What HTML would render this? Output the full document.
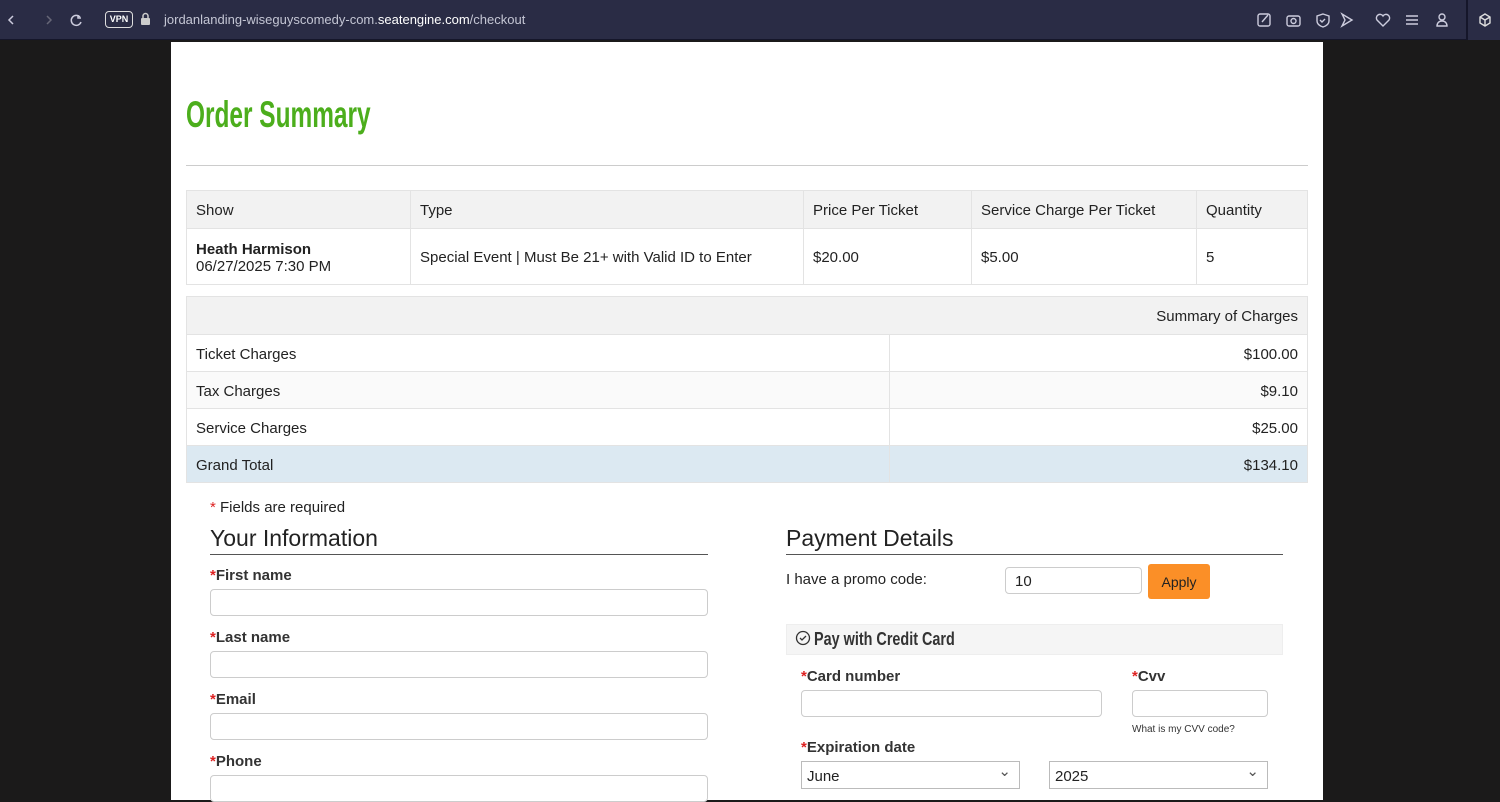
<!DOCTYPE html>
<html><head><meta charset="utf-8"><style>
*{box-sizing:border-box;margin:0;padding:0}
body{width:1500px;height:800px;overflow:hidden;background:#1b1a1a;font-family:"Liberation Sans",sans-serif;position:relative;color:#222}
.bar{position:absolute;left:0;top:0;width:1500px;height:40px;background:#2a2c45;border-bottom:1px solid #15162a}
.bar .url{position:absolute;left:164px;top:12px;font-size:13px;color:#c4c6d4}
.bar .url b{color:#fff;font-weight:normal}
.vpn{position:absolute;left:105px;top:11px;width:28px;height:17px;border:1.5px solid #ddd;border-radius:4px;color:#fff;font-size:9px;font-weight:bold;text-align:center;line-height:14px}
.ext{position:absolute;left:1466px;top:0;width:34px;height:40px;background:#2a2c45;border-left:2px solid #15162a}
.page{position:absolute;left:171px;top:42px;width:1152px;height:758px;background:#fff}
h1{position:absolute;left:15px;top:52px;font-family:"Liberation Sans Narrow","Liberation Sans",sans-serif;font-size:37px;color:#4cae1c;font-weight:bold;transform:scaleX(.66);transform-origin:left;white-space:nowrap}
.hr{position:absolute;left:15px;top:123px;width:1122px;border-top:1px solid #ccc}
table{position:absolute;left:15px;border-collapse:collapse;width:1122px;font-size:15px}
td{border:1px solid #e3e3e3;padding:2px 9px 0}
.t1{top:148px}
.t1 tr.h td{background:#f2f2f2;height:38px}
.t1 tr.d td{height:56px}
.t2{top:254px}
.t2 td{height:37px}
.t2 tr.h td{background:#f2f2f2;height:38px;text-align:right}
.t2 tr.g td{background:#dce9f2}
.t2 .r{text-align:right}
.t2 tr:nth-child(3) td{background:#fafafa}
.req{color:#d22;font-size:15px}
.lbl{position:absolute;font-size:15px;font-weight:bold;color:#333}
.inp{position:absolute;height:27px;border:1px solid #ccc;border-radius:4px;background:#fff}
.sec{position:absolute;font-size:23px;color:#222;border-bottom:1px solid #555;width:498px;height:30px}
.sel{position:absolute;height:28px;border:1px solid #bbb;font-size:15px;padding:6px 5px;background:#fff}
.sel:after{content:"⌄";position:absolute;right:8px;top:0px;font-size:15px;color:#555}
</style></head><body>
<div class="bar">
<svg style="position:absolute;left:4px;top:12px" width="80" height="16" fill="none" stroke-width="1.5"><path d="M9 4l-4 4 4 4" stroke="#ccd"/><path d="M43 4l4 4-4 4" stroke="#667"/><path d="M80 5a5 5 0 1 0 1 5" stroke="#ccd" transform="translate(-4 0)"/><path d="M74 3v3h3" stroke="#ccd"/></svg>
<div class="vpn">VPN</div>
<svg style="position:absolute;left:140px;top:12px" width="11" height="14"><rect x="1" y="6" width="9" height="7" rx="1" fill="#ccc"/><path d="M3 6V4a2.5 2.5 0 015 0v2" stroke="#ccc" fill="none" stroke-width="1.5"/></svg>
<div class="url">jordanlanding-wiseguyscomedy-com.<b>seatengine.com</b>/checkout</div>
<svg style="position:absolute;left:1256px;top:11px" width="200" height="18" fill="none" stroke="#ccd" stroke-width="1.4">
<rect x="2" y="3" width="12" height="12" rx="2"/><path d="M6 11l6-7"/>
<rect x="31" y="5" width="13" height="10" rx="2"/><circle cx="37.5" cy="10" r="2.5"/>
<path d="M67 3l6 2v5c0 3-3 5-6 6-3-1-6-3-6-6V5z"/><path d="M64 9l2 2 3-3"/>
<path d="M86 3l10 6-10 6 3-6z"/>
<path d="M127 15l-6-6a3.5 3.5 0 016-4 3.5 3.5 0 016 4z"/>
<path d="M150 5h12M150 9h12M150 13h12"/>
<circle cx="186" cy="6" r="3"/><path d="M181 15c0-3 2-5 5-5s5 2 5 5z"/>
</svg>
<div class="ext"><svg style="position:absolute;left:9px;top:12px" width="16" height="16" fill="none" stroke="#ddd" stroke-width="1.4"><path d="M8 2l5 3v6l-5 3-5-3V5zM3 5l5 3 5-3M8 8v6"/></svg></div>
</div>
<div class="page">
<h1>Order Summary</h1>
<div class="hr"></div>
<table class="t1">
<tr class="h"><td style="width:224px">Show</td><td style="width:393px">Type</td><td style="width:168px">Price Per Ticket</td><td style="width:225px">Service Charge Per Ticket</td><td>Quantity</td></tr>
<tr class="d"><td><b>Heath Harmison</b><br>06/27/2025 7:30 PM</td><td>Special Event | Must Be 21+ with Valid ID to Enter</td><td>$20.00</td><td>$5.00</td><td>5</td></tr>
</table>
<table class="t2">
<tr class="h"><td colspan="2">Summary of Charges</td></tr>
<tr><td style="width:703px">Ticket Charges</td><td class="r">$100.00</td></tr>
<tr><td>Tax Charges</td><td class="r">$9.10</td></tr>
<tr><td>Service Charges</td><td class="r">$25.00</td></tr>
<tr class="g"><td>Grand Total</td><td class="r">$134.10</td></tr>
</table>
<div style="position:absolute;left:39px;top:457px;font-size:15px"><span class="req">*</span> Fields are required</div>
<div class="sec" style="left:39px;top:483px">Your Information</div>
<div class="lbl" style="left:39px;top:525px"><span class="req">*</span>First name</div><div class="inp" style="left:39px;top:547px;width:498px"></div>
<div class="lbl" style="left:39px;top:587px"><span class="req">*</span>Last name</div><div class="inp" style="left:39px;top:609px;width:498px"></div>
<div class="lbl" style="left:39px;top:649px"><span class="req">*</span>Email</div><div class="inp" style="left:39px;top:671px;width:498px"></div>
<div class="lbl" style="left:39px;top:711px"><span class="req">*</span>Phone</div><div class="inp" style="left:39px;top:733px;width:498px"></div>
<div class="sec" style="left:615px;top:483px;width:497px">Payment Details</div>
<div style="position:absolute;left:615px;top:529px;font-size:15px">I have a promo code:</div>
<div class="inp" style="left:834px;top:525px;width:137px;font-size:15px;padding:5px 9px">10</div>
<div style="position:absolute;left:977px;top:522px;width:62px;height:35px;background:#fb8f27;border-radius:3px;font-size:14px;text-align:center;line-height:37px;color:#222">Apply</div>
<div style="position:absolute;left:615px;top:582px;width:497px;height:31px;background:#f5f5f5;border:1px solid #eee;"></div>
<svg style="position:absolute;left:624px;top:588px" width="16" height="16" fill="none" stroke="#333" stroke-width="1.3"><circle cx="8" cy="8" r="6.5"/><path d="M5 8l2 2 4-4"/></svg>
<div style="position:absolute;left:643px;top:587px;font-family:'Liberation Sans Narrow','Liberation Sans',sans-serif;font-weight:bold;font-size:18px;color:#333;transform:scaleX(.8);transform-origin:left;white-space:nowrap">Pay with Credit Card</div>
<div class="lbl" style="left:630px;top:626px"><span class="req">*</span>Card number</div><div class="inp" style="left:630px;top:648px;width:301px"></div>
<div class="lbl" style="left:961px;top:626px"><span class="req">*</span>Cvv</div><div class="inp" style="left:961px;top:648px;width:136px"></div>
<div style="position:absolute;left:961px;top:682px;font-size:10px;color:#333">What is my CVV code?</div>
<div class="lbl" style="left:630px;top:697px"><span class="req">*</span>Expiration date</div>
<div class="sel" style="left:630px;top:719px;width:219px">June</div>
<div class="sel" style="left:878px;top:719px;width:219px">2025</div>
</div>
</body></html>
